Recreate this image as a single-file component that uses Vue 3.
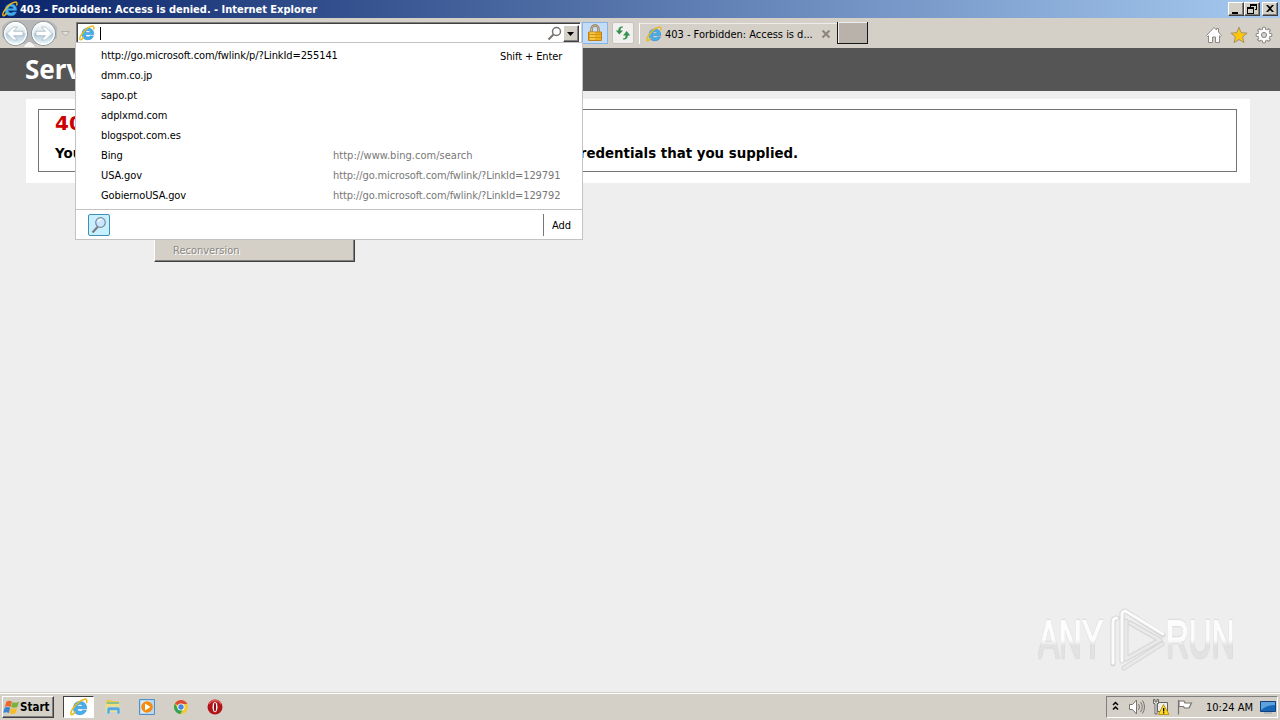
<template>
  <div class="screen">
    <header class="titlebar">
      <svg class="ie title-icon" viewBox="0 0 16 16"><use href="#ie-logo" /></svg>
      <span class="title-text">403 - Forbidden: Access is denied. - Internet Explorer</span>
      <div class="window-buttons">
        <button class="win-btn"><svg viewBox="0 0 14 12"><path d="M3 9h6v2H3z" /></svg></button>
        <button class="win-btn">
          <svg viewBox="0 0 14 12"><path d="M5 1h7v6h-2v-1h1V3H6v1H5zM2 4h7v7H2zm1 2v4h5V6z" fill-rule="evenodd" /></svg>
        </button>
        <button class="win-btn close">
          <svg viewBox="0 0 14 12"><path d="M3 2h2l2 2 2-2h2L8 5.500l3 3.500H9L7 7 5 9H3l3-3.500z" /></svg>
        </button>
      </div>
    </header>

    <nav class="toolbar">
      <svg class="history" viewBox="0 0 74 30">
        <defs>
          <linearGradient id="glass" x1="0" y1="0" x2="0" y2="1">
            <stop offset="0" stop-color="#fff" />
            <stop offset=".48" stop-color="#dce6ec" />
            <stop offset=".52" stop-color="#b4cbd8" />
            <stop offset="1" stop-color="#f1fcff" />
          </linearGradient>
        </defs>
        <path d="M15 2H44Q52 2 57 9V20L44 26H15L2 19V9Q7 2 15 2Z" fill="#b9b8b8" />
        <path d="M24 29Q29 19 35 29Z" fill="#f5f5f5" />
        <g v-for="x in [15.5, 43.500]" :key="x">
          <circle :cx="x" cy="15.500" r="12" fill="url(#glass)" stroke="#7f8e97" />
          <circle :cx="x" cy="15.500" r="10.800" fill="none" stroke="#fff" stroke-width="1.200" />
        </g>
        <g fill="#fff" stroke="#9db1be" stroke-width=".7">
          <path d="M7 15.500 13.500 9h4l-4 4.300H23v4.400h-9.500l4 4.300h-4z" />
          <path d="M52 15.500 45.500 9h-4l4 4.300H36v4.400h9.500l-4 4.300h4z" />
        </g>
        <path d="M61.500 13.500h8l-4 4.500z" fill="#e5e1da" stroke="#b5b0a9" />
      </svg>

      <div class="address">
        <svg class="ie address-icon" viewBox="0 0 16 16"><use href="#ie-logo" /></svg>
        <span class="caret"></span>
        <svg class="address-search" viewBox="0 0 16 16">
          <circle cx="9.500" cy="5.500" r="4" fill="#fff" stroke="#77736e" stroke-width="1.500" />
          <path d="M6.500 8.500 1.500 13.500" stroke="#77736e" stroke-width="2" />
        </svg>
        <button class="drop"><svg viewBox="0 0 8 4"><path d="M0 0h7L3.500 4z" /></svg></button>
      </div>

      <button class="tool lock">
        <svg viewBox="0 0 16 18">
          <path d="M4.500 8V5a3.500 3.500 0 0 1 7 0v3" fill="none" stroke="#8c7350" stroke-width="2.400" />
          <path d="M4.500 8V5a3.500 3.500 0 0 1 7 0v3" fill="none" stroke="#ddd0a9" stroke-width=".8" />
          <path d="M1.500 8h13v8.500h-13z" fill="#eeb01c" stroke="#bd831b" />
          <path d="M2 10.500h12M2 13.500h12" stroke="#c98f18" stroke-width=".8" />
          <path d="M3 9h5M3 12h5M3 15h5" stroke="#ffda63" />
        </svg>
      </button>
      <button class="tool refresh">
        <svg viewBox="0 0 16 16">
          <path d="M8 2.500C6 2.500 5.500 3.500 5.500 5.500H8L4.300 9.500.8 5.500h2.500C3.300 2.500 5 1 8 1.500zM8 13.500c2.500 0 2.500-1 2.500-3H8l3.700-4.500 3.500 4.500h-2.400c0 3-1.800 4.500-4.800 4z" fill="#35934d" />
        </svg>
      </button>

      <div class="tab">
        <svg class="ie tab-icon" viewBox="0 0 16 16"><use href="#ie-logo" /></svg>
        <span class="tab-text">403 - Forbidden: Access is d...</span>
        <svg class="tab-close" viewBox="0 0 10 10"><path d="m1.500 1.500 7 7m0-7-7 7" stroke="#8b857e" stroke-width="2" /></svg>
      </div>
      <button class="new-tab"></button>

      <div class="commands">
        <svg viewBox="0 0 18 18">
          <path d="M1.500 9.500 9 1.500l2.500 2.500V2.500h2V6l3 3.500-1 1-1-.8v6.800h-4V11h-3v5.500h-4V9.700l-1 .8z" fill="#fff" stroke="#8c8984" />
        </svg>
        <svg viewBox="0 0 18 18">
          <path d="m9 1.300 2.200 5.400 5.900.4-4.500 3.800 1.400 5.700L9 13.500l-5 3.100 1.400-5.700L.9 7.100l5.900-.4z" fill="#ffc60a" stroke="#a2926d" />
        </svg>
        <svg viewBox="0 0 18 18">
          <path
            v-for="a in gearAngles"
            :key="a"
            d="M7.300 4 7.700 1.200h2.600l.4 2.800"
            :transform="`rotate(${a} 9 9)`"
            fill="#fff"
            stroke="#8c8984"
          />
          <circle cx="9" cy="9" r="5.500" fill="#fff" />
          <circle cx="9" cy="9" r="2.600" fill="#d4d0c8" stroke="#8c8984" />
        </svg>
      </div>
    </nav>

    <main class="page">
      <div class="page-header">Server Error</div>
      <div class="content">
        <section class="fieldset">
          <h2>403 - Forbidden: Access is denied.</h2>
          <h3>You do not have permission to view this directory or page using the credentials that you supplied.</h3>
        </section>
      </div>
    </main>

    <div class="context-menu">Reconversion</div>

    <div class="suggestions">
      <div v-for="item in suggestions" :key="item.label" class="suggestion">
        <span class="label">{{ item.label }}</span>
        <span v-if="item.url" class="url" :class="{ short: item.label === 'Bing' }">{{ item.url }}</span>
        <span v-if="item.hint" class="hint">{{ item.hint }}</span>
      </div>
      <div class="suggestion-footer">
        <button class="provider">
          <svg viewBox="0 0 20 20">
            <path d="M9 11.500 3.500 17.500" stroke="#777d88" stroke-width="2.200" />
            <circle cx="11.500" cy="7.500" r="4.800" fill="#c9e7ff" stroke="#7f8b9c" stroke-width="1.200" />
            <path d="M9 7a3 3 0 0 1 4-2.500" fill="none" stroke="#fff" stroke-width="1.200" />
          </svg>
        </button>
        <span class="add">Add</span>
      </div>
    </div>

    <div class="watermark">
      <span class="any">ANY</span>
      <svg viewBox="0 0 60 66">
        <g fill="none" stroke-linejoin="round" stroke-linecap="round">
          <path d="M7 57V15q0-4 4-4M16 6V54M16 6q2-3 5-1L57 28M20 14V52L54 33 24 16M18 61 56 37" stroke="#d6d6d6" stroke-width="5" />
          <path d="M7 56V15q0-4 4-4M16 54V6q2-3 5-1L57 27" stroke="#fbfbfb" stroke-width="3" />
          <path d="M20 14V52L54 33 24 16M18 61 56 37" stroke="#e9e9e9" stroke-width="3" />
        </g>
      </svg>
      <span class="run">RUN</span>
    </div>

    <footer class="taskbar">
      <button class="start">
        <svg viewBox="0 0 18 16">
          <path d="M3.500 2.500Q6.500.3 9.500 2.300L8 8Q5 6.500 2 8z" fill="#e9692c" />
          <path d="M10.200 2.800q3 1.700 6.800-.5L15.200 8q-3.300 1.500-6.700 0z" fill="#78b43c" />
          <path d="M1.700 8.700q3-1.500 6 0L6.200 14.300q-3-1.700-6 0z" fill="#3c82cf" />
          <path d="M8.400 9q3.300 1.500 6.600 0L13.300 14.500q-3.300 1.700-6.400 0z" fill="#f6bd28" />
        </svg>
        <span>Start</span>
      </button>
      <div class="task active">
        <svg class="ie" viewBox="0 0 16 16"><use href="#ie-logo" /></svg>
      </div>
      <div class="task explorer">
        <svg viewBox="0 0 18 18">
          <path d="M2 2h5l1 1h7v10H2z" fill="#e9c759" />
          <path d="M3 4h12v3H3z" fill="#8ac48b" />
          <path d="M1.500 6h14v8h-14z" fill="#f3dd83" />
          <path d="M3 16v-5q0-2 2-2h9q2 0 2 2v5h-3v-3.500H6V16z" fill="#58a9da" stroke="#bce4f6" stroke-width=".6" />
        </svg>
      </div>
      <div class="task player">
        <svg viewBox="0 0 18 18">
          <path d="M1.500 1.500h15v15h-15z" fill="#b5d8f4" stroke="#4f8fca" />
          <path d="M3 3h9v12H3z" fill="#fff" opacity=".5" />
          <circle cx="9" cy="9" r="5.800" fill="#f58b0c" />
          <path d="M7 5.500v7L12.500 9z" fill="#fff" />
        </svg>
      </div>
      <div class="task chrome">
        <svg viewBox="0 0 18 18">
          <circle cx="9" cy="9" r="7" fill="#f4c931" />
          <path d="M9 9 2.940 5.500A7 7 0 0 1 15.060 5.500L15.500 6H9z" fill="#df4a37" />
          <path d="M2.940 5.500A7 7 0 0 0 8.500 16L11 11 6 11z" fill="#35a355" />
          <circle cx="9" cy="9" r="3.600" fill="#fff" />
          <circle cx="9" cy="9" r="2.700" fill="#4486e0" />
        </svg>
      </div>
      <div class="task opera">
        <svg viewBox="0 0 18 18">
          <circle cx="9" cy="9" r="7.500" fill="#b31318" />
          <path d="M3 6a7 7 0 0 1 12 0" fill="none" stroke="#df5a58" stroke-width="1.500" />
          <ellipse cx="9" cy="9" rx="2.500" ry="5.300" fill="#fff" />
          <ellipse cx="9" cy="9" rx="1.100" ry="4.500" fill="#8c1014" />
        </svg>
      </div>

      <div class="tray">
        <svg class="chevrons" viewBox="0 0 8 10"><path d="M1 4 3.500 1.500 6 4M1 8.500 3.500 6 6 8.500" fill="none" stroke="#000" stroke-width="1.500" /></svg>
        <svg class="sound" viewBox="0 0 18 18">
          <path d="M1.500 6.500h3l4-4.500v14l-4-4.500h-3z" fill="#fff" stroke="#77736e" />
          <path d="M10.500 6q2 3 0 6M12.500 4q3.500 5 0 10M14.500 2.500q4 6.500 0 13" fill="none" stroke="#77736e" />
        </svg>
        <svg class="network" viewBox="0 0 18 18">
          <path d="M5.500 4.500h10v9h-10z" fill="#eee" stroke="#66625d" />
          <path d="M1.500 1.500v4h1.500V16h2V5.500h1.500v-4H5V4H3V1.500z" fill="#fff" stroke="#66625d" />
          <path d="m11.500 6.500 5.500 10H6.500z" fill="#ffdc20" stroke="#bd9712" />
          <path d="M11 10h1.300v3.500H11zM11 14.300h1.300v1.200H11z" />
        </svg>
        <svg class="flag" viewBox="0 0 18 18">
          <path d="M2.500 2v14.500M3 3h5l1 2h6.500L13 10H8.500l-1-1.500H3z" fill="#fff" stroke="#77736e" stroke-width="1.200" />
        </svg>
        <span class="clock">10:24 AM</span>
        <svg class="desktop" viewBox="0 0 16 14">
          <path d="M.5 1.500h15v10H.5z" fill="#1767b9" stroke="#154178" />
          <path d="M1 2h14v3Q7 5 1 10z" fill="#5ba2df" />
          <path d="M4 12.500h8v1H4z" fill="#90a3b2" />
        </svg>
      </div>
    </footer>

    <svg class="symbols">
      <symbol id="ie-logo" viewBox="0 0 16 16">
        <path
          d="M14.800 9.600H6.200Q6.400 12 8.900 12q1.600 0 2.300-1.100h3.300Q13 14.800 8.900 14.800 3 14.600 3 8.900 3.200 3.100 8.900 3q6 .2 5.900 6.600zM6.300 7.400h5.200Q11.200 5.500 8.900 5.500T6.300 7.400z"
          fill="#45b0ec"
          stroke="#2582c6"
          stroke-width=".5"
        />
        <path d="M4.500 12.500Q1.500 16 .9 14.300.200 12 4.500 7T12.500 1.300Q15.500.1 14.800 4" fill="none" stroke="#e9b91f" stroke-width="1.400" stroke-linecap="round" />
      </symbol>
    </svg>
  </div>
</template>

<script setup>
const suggestions = [
  { label: 'http://go.microsoft.com/fwlink/p/?LinkId=255141', hint: 'Shift + Enter' },
  { label: 'dmm.co.jp' },
  { label: 'sapo.pt' },
  { label: 'adplxmd.com' },
  { label: 'blogspot.com.es' },
  { label: 'Bing', url: 'http://www.bing.com/search' },
  { label: 'USA.gov', url: 'http://go.microsoft.com/fwlink/?LinkId=129791' },
  { label: 'GobiernoUSA.gov', url: 'http://go.microsoft.com/fwlink/?LinkId=129792' },
]

const gearAngles = [0, 45, 90, 135, 180, 225, 270, 315]
</script>

<style>
body {
  margin: 0;
  overflow: hidden;
}
</style>

<style scoped>
.screen {
  position: relative;
  display: flex;
  flex-direction: column;
  width: 1280px;
  height: 720px;
  overflow: hidden;
  background: #eee;
  color: #000;
  font-family: 'DejaVu Sans Condensed', 'DejaVu Sans', sans-serif;
  font-stretch: condensed;
  font-size: 11px;
}

.screen * {
  box-sizing: border-box;
}

svg {
  display: block;
  flex: none;
}

button {
  padding: 0;
  border: 0;
  font: inherit;
  flex: none;
}

.symbols {
  position: absolute;
  width: 0;
  height: 0;
}

.ie {
  width: 16px;
  height: 16px;
}

.titlebar {
  display: flex;
  align-items: center;
  height: 18px;
  padding: 0 2px;
  background: linear-gradient(90deg, #0a246a, #a6caf0);
  color: #fff;
}

.title-text {
  margin-left: 2px;
  padding-top: 1px;
  font-weight: bold;
  line-height: 17px;
  letter-spacing: -0.02px;
  white-space: nowrap;
}

.window-buttons {
  display: flex;
  margin-left: auto;
}

.win-btn {
  width: 16px;
  height: 14px;
  background: #d4d0c8;
  border: 1px solid;
  border-color: #fff #404040 #404040 #fff;
  box-shadow: inset -1px -1px #808080;
}

.win-btn svg {
  width: 14px;
  height: 12px;
}

.win-btn.close {
  margin-left: 2px;
}

.toolbar {
  display: flex;
  height: 30px;
  background: #d4d0c8;
}

.history {
  width: 74px;
  height: 30px;
}

.address {
  display: flex;
  width: 505px;
  height: 21px;
  margin: 4px 0 0 2px;
  padding: 2px 1px 1px 2px;
  background: #fff;
  border: 1px solid;
  border-color: #808080 #fff #fff #808080;
  box-shadow: inset 1px 1px #404040;
}

.caret {
  width: 1px;
  height: 13px;
  margin: 2px 0 0 5px;
  background: #000;
}

.address-search {
  width: 16px;
  height: 16px;
  margin: 1px 0 0 auto;
}

.drop {
  display: flex;
  align-items: center;
  justify-content: center;
  width: 16px;
  height: 17px;
  background: #d4d0c8;
  border: 1px solid;
  border-color: #fff #404040 #404040 #fff;
  box-shadow: inset -1px -1px #808080;
}

.drop svg {
  width: 8px;
  height: 4px;
}

.tool {
  display: flex;
  align-items: center;
  justify-content: center;
  margin-top: 4px;
  height: 22px;
}

.lock {
  width: 26px;
  margin-left: 1px;
  background: #c5dcf7;
  border: 1px solid #86b4e8;
}

.lock svg {
  width: 16px;
  height: 18px;
}

.refresh {
  width: 22px;
  margin-left: 4px;
  background: #f1f0ee;
  border: 1px solid #c5c3bf;
  border-radius: 2px;
}

.refresh svg {
  width: 16px;
  height: 16px;
}

.tab {
  display: flex;
  align-items: center;
  width: 198px;
  height: 21px;
  margin: 5px 0 0 5px;
  padding-left: 6px;
  border-top: 1px solid #eeece8;
  border-left: 1px solid #fff;
}

.tab-text {
  width: 151px;
  margin-left: 3px;
  letter-spacing: -0.02px;
  white-space: nowrap;
}

.tab-close {
  width: 10px;
  height: 10px;
  margin-left: 5px;
}

.new-tab {
  width: 31px;
  height: 22px;
  margin-top: 4px;
  background: #b9b2aa;
  border: solid #161616;
  border-width: 0 1px 1px;
  box-shadow: inset 1px 1px #eee;
}

.commands {
  display: flex;
  gap: 7px;
  margin: 8px 7px 0 auto;
}

.commands svg {
  width: 18px;
  height: 18px;
}

.page {
  flex: 1;
  font-family: 'DejaVu Sans', sans-serif;
  font-stretch: normal;
}

.page-header {
  height: 43px;
  padding-left: 25px;
  background: #555;
  color: #fff;
  font-family: 'Noto Sans', sans-serif;
  font-size: 26px;
  font-weight: bold;
  line-height: 43px;
}

.content {
  width: 1224px;
  height: 84px;
  margin: 8px 0 0 26px;
  padding: 10px 12px;
  background: #fff;
}

.fieldset {
  width: 1199px;
  height: 63px;
  padding-left: 16px;
  border: 1px solid #747474;
}

h2 {
  margin: 0;
  color: #c00;
  font-size: 20px;
  line-height: 26px;
}

h3 {
  margin: 9px 0 0;
  font-size: 13.36px;
  line-height: 18px;
  white-space: nowrap;
}

.context-menu {
  position: absolute;
  left: 154px;
  top: 236px;
  width: 201px;
  height: 26px;
  padding: 7px 0 0 18px;
  background: #d4d0c8;
  border: 1px solid;
  border-color: #fff #404040 #404040 #fff;
  box-shadow: inset -1px -1px #808080;
  color: #8b8883;
  text-shadow: 1px 1px #fff;
}

.suggestions {
  position: absolute;
  left: 75px;
  top: 42px;
  width: 508px;
  height: 198px;
  padding-top: 3px;
  background: #fff;
  border: 1px solid #c3c3c3;
}

.suggestion {
  display: flex;
  height: 20px;
  padding-left: 25px;
  line-height: 20px;
  letter-spacing: -0.11px;
  white-space: nowrap;
}

.label {
  width: 232px;
}

.url {
  color: #777;
}

.url.short {
  letter-spacing: 0.03px;
}

.hint {
  width: 62px;
  margin: 1px 0 0 167px;
}

.suggestion-footer {
  display: flex;
  align-items: center;
  height: 30px;
  margin-top: 3px;
  padding-left: 12px;
  border-top: 1px solid #c3c3c3;
}

.provider {
  width: 22px;
  height: 22px;
  background: #c7effd;
  border: 1px solid #3e8fb5;
  border-radius: 2px;
}

.provider svg {
  width: 20px;
  height: 20px;
}

.add {
  width: 39px;
  height: 22px;
  margin-left: auto;
  padding-left: 8px;
  border-left: 1px solid #777;
  line-height: 23px;
}

.watermark {
  position: absolute;
  left: 1038px;
  top: 606px;
  width: 200px;
  height: 68px;
  display: flex;
  align-items: center;
  color: #f9f9f9;
  font-family: 'Liberation Sans', sans-serif;
  font-stretch: normal;
  font-size: 51px;
  line-height: 68px;
}

.any,
.run {
  flex: none;
  color: transparent;
  background: linear-gradient(#fcfcfc 50%, #e2e2e2 58%);
  background-clip: text;
  -webkit-text-stroke: 2px transparent;
  filter: drop-shadow(0 0 1px #c4c4c4);
  transform: scaleX(0.62);
  transform-origin: left;
}

.any {
  width: 106px;
  margin-right: -38px;
}

.run {
  width: 112px;
}

.watermark svg {
  width: 60px;
  height: 66px;
}

.taskbar {
  display: flex;
  align-items: center;
  height: 28px;
  padding: 2px 2px 1px;
  background: #d4d0c8;
  border-top: 1px solid #d4d0c8;
  box-shadow: inset 0 1px #fff;
}

.start {
  display: flex;
  align-items: center;
  width: 52px;
  height: 22px;
  padding-left: 0;
  background: #d4d0c8;
  border: 1px solid;
  border-color: #fff #404040 #404040 #fff;
  box-shadow: inset -1px -1px #808080;
  font-weight: bold;
  font-size: 11.5px;
}

.start svg {
  width: 17px;
  height: 16px;
}

.task {
  display: flex;
  align-items: center;
  justify-content: center;
  width: 34px;
  height: 22px;
}

.task svg {
  width: 18px;
  height: 18px;
}

.task.active {
  width: 31px;
  margin-left: 9px;
  margin-right: 2px;
  background: #fff;
  border: 1px solid;
  border-color: #404040 #fff #fff #404040;
}

.tray {
  display: flex;
  align-items: center;
  width: 172px;
  height: 22px;
  margin-left: auto;
  border: 1px solid;
  border-color: #808080 #fff #fff #808080;
}

.chevrons {
  width: 8px;
  height: 10px;
  margin-left: 5px;
  margin-bottom: 2px;
}

.sound {
  width: 18px;
  height: 18px;
  margin-left: 8px;
}

.network,
.flag {
  width: 18px;
  height: 18px;
  margin-left: 6px;
}

.clock {
  width: 48px;
  margin-left: 12px;
  white-space: nowrap;
}

.desktop {
  width: 16px;
  height: 14px;
  margin-left: 6px;
}
</style>
